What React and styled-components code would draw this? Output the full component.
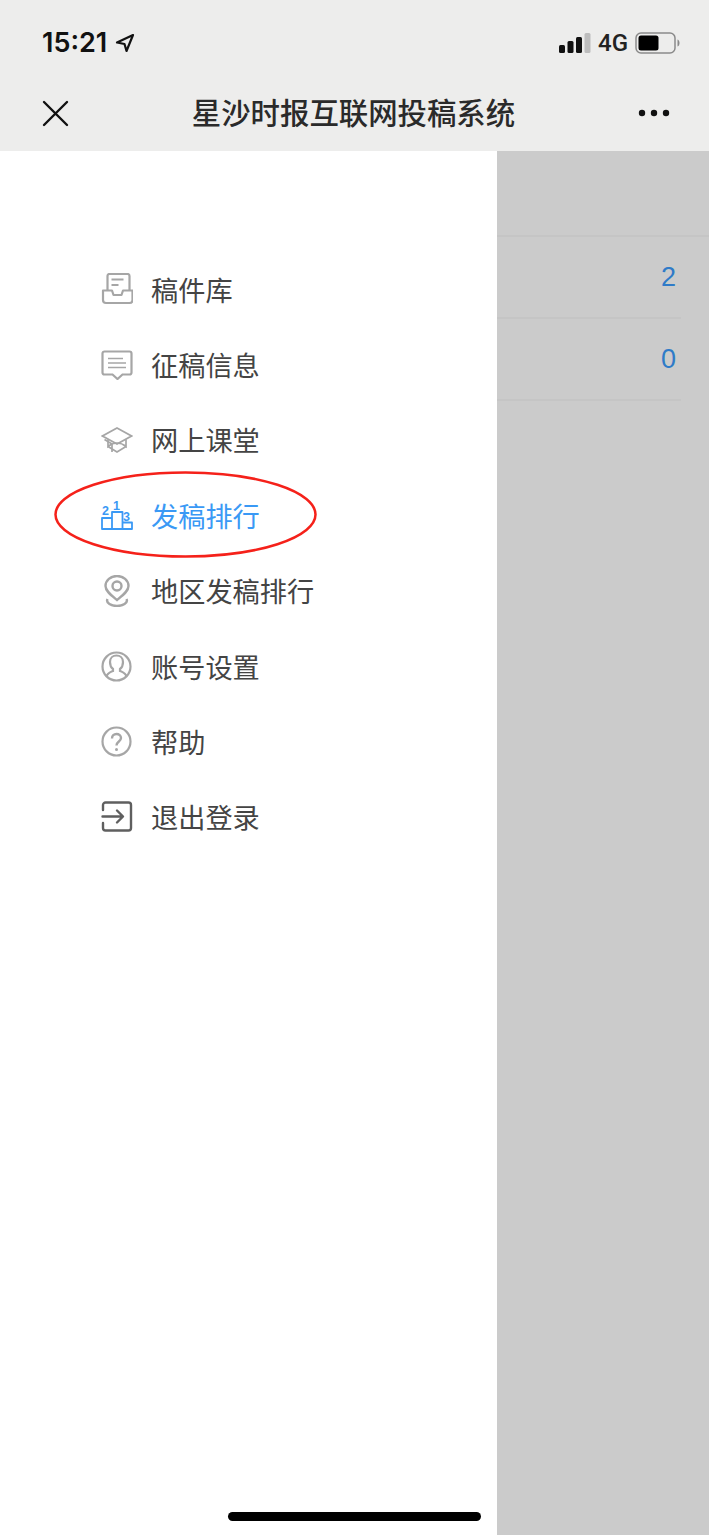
import React from "react";
import styled, { createGlobalStyle } from "styled-components";

const CJK = `"Noto Sans CJK SC", "Liberation Sans", sans-serif`;

const GlobalStyle = createGlobalStyle`
  html, body {
    margin: 0;
    padding: 0;
    background: #fff;
  }
  * {
    box-sizing: border-box;
  }
`;

const Screen = styled.div`
  position: relative;
  width: 709px;
  height: 1535px;
  overflow: hidden;
  display: flex;
  flex-direction: column;
  font-family: ${CJK};
`;

const Header = styled.header`
  height: 151px;
  flex: none;
  background: #ededec;
  display: flex;
  flex-direction: column;
`;

const StatusBar = styled.div`
  height: 75px;
  padding: 10px 29px 0 42px;
  display: flex;
  align-items: center;
  justify-content: space-between;
`;

const TimeGroup = styled.div`
  display: flex;
  align-items: center;
  gap: 8px;
`;

const Time = styled.span`
  font-family: Inter, "Liberation Sans", sans-serif;
  font-size: 27px;
  font-weight: 600;
  color: #111;
`;

const StatusRight = styled.div`
  display: flex;
  align-items: center;
  gap: 7px;
`;

const Network = styled.span`
  font-family: Roboto, "Liberation Sans", sans-serif;
  font-size: 24px;
  font-weight: 500;
  color: #222;
`;

const NavBar = styled.div`
  height: 76px;
  padding: 0 39px 0 42px;
  display: flex;
  align-items: center;
  justify-content: space-between;
`;

const NavTitle = styled.h1`
  margin: 0 0 4px;
  font-size: 29.4px;
  font-weight: 500;
  line-height: 38px;
  color: #2a2a2a;
`;

const Body = styled.div`
  flex: 1;
  display: flex;
  min-height: 0;
`;

const Drawer = styled.nav`
  width: 497px;
  flex: none;
  background: #fff;
  padding: 100px 0 0 100px;
  display: flex;
  flex-direction: column;
`;

const MenuItem = styled.div`
  height: 75.4px;
  display: flex;
  align-items: center;
  gap: 18px;
  font-size: 27.2px;
  color: ${(p) => (p.$active ? "#3a99f5" : "#444")};
`;

const IconBox = styled.span`
  width: 33px;
  height: 36px;
  margin-top: 1px;
  flex: none;
  display: flex;
  align-items: center;
  justify-content: center;
`;

const Backdrop = styled.div`
  flex: 1;
  background: #cbcbcb;
`;

const TopRow = styled.div`
  height: 86px;
  border-bottom: 2px solid #c5c5c5;
`;

const CountRow = styled.div`
  height: 82px;
  width: 184px;
  padding-right: 5px;
  border-bottom: 2px solid #c5c5c5;
  display: flex;
  align-items: center;
  justify-content: flex-end;
  font-family: "Liberation Sans", sans-serif;
  font-size: 27px;
  color: #2f7bc8;
`;

const Highlight = styled.svg`
  position: absolute;
  left: 53px;
  top: 470px;
`;

const HomeBar = styled.div`
  position: absolute;
  left: 228px;
  top: 1512px;
  width: 253px;
  height: 9px;
  border-radius: 5px;
  background: #000;
`;

const grey = { fill: "none", stroke: "#a6a6a6", strokeWidth: 2.2 };

const ArchiveIcon = () => (
  <svg width="32" height="32" viewBox="0 0 32 32" {...grey} strokeLinejoin="round">
    <path d="M6.500 17.500V3a2 2 0 0 1 2-2h18a2 2 0 0 1 2 2v14.500" />
    <path d="M10.500 6.500h12M10.500 12h7" strokeWidth="1.800" />
    <path d="M2 17.500v9.500a3 3 0 0 0 3 3h23.500a3 3 0 0 0 3-3v-9.500h-9.500l-1.500 4.500H12.500L11 17.500z" />
  </svg>
);

const MessageIcon = () => (
  <svg width="32" height="30" viewBox="0 0 32 30" {...grey}>
    <path d="M3.500 1.500h25a2 2 0 0 1 2 2v19a2 2 0 0 1-2 2h-7l-5 4.500-5-4.500h-8a2 2 0 0 1-2-2v-19a2 2 0 0 1 2-2z" />
    <path d="M7 8.500h15M7 13h18M7 17.500h18" strokeWidth="1.600" />
  </svg>
);

const CapIcon = () => (
  <svg width="32" height="28" viewBox="0 0 32 28" {...grey} strokeWidth="1.700">
    <path d="M16 2 30.500 10 16 18 1.500 10z" />
    <path d="M7 13.500v7c3-2.500 6-3.500 9-3.500s6 1 9 3.500v-7" />
    <path d="M7 20.500 16 26l9-5.500M3.500 13.500 11 18v8" />
  </svg>
);

const PodiumIcon = () => (
  <svg width="32" height="32" viewBox="0 0 32 32" fill="none" stroke="#3a99f5" strokeWidth="1.800" strokeLinejoin="round">
    <path d="M1 30V19h10v11zM11 30V13h10.500v17zM21.500 30v-6.500H31V30z" />
    <text x="1" y="16" fontFamily="Liberation Sans, sans-serif" fontSize="12.500" fontWeight="700" fill="#3a99f5" stroke="none">2</text>
    <text x="12" y="10.500" fontFamily="Liberation Sans, sans-serif" fontSize="12.500" fontWeight="700" fill="#3a99f5" stroke="none">1</text>
    <text x="22" y="22" fontFamily="Liberation Sans, sans-serif" fontSize="12.500" fontWeight="700" fill="#3a99f5" stroke="none">3</text>
  </svg>
);

const PinIcon = () => (
  <svg width="28" height="32" viewBox="0 0 28 32" {...grey} strokeWidth="2.400">
    <path d="M14 25C8 20 2.500 16 2.500 11a11.500 10 0 0 1 23 0c0 5-5.500 9-11.500 14z" />
    <circle cx="14" cy="11" r="4.500" />
    <path d="M4.500 24c-2 4 4 7 9.500 7s11.500-3 9.500-7" />
  </svg>
);

const UserIcon = () => (
  <svg width="31" height="31" viewBox="0 0 31 31" {...grey}>
    <circle cx="15.500" cy="15.500" r="14" />
    <path d="M5.500 25.500c.5-3 3-4 6.500-5.500v-2c-2-1.500-3-4-3-7 0-4 3-6.500 6.500-6.500S22 7 22 11c0 3-1 5.500-3 7v2c3.500 1.500 6 2.500 6.500 5.500" />
  </svg>
);

const HelpIcon = () => (
  <svg width="31" height="31" viewBox="0 0 31 31" {...grey}>
    <circle cx="15.500" cy="15.500" r="14" />
    <path d="M11 12.500c0-2.800 2-4.500 4.500-4.500s4.500 1.700 4.500 4c0 3.500-4.500 3.500-4.500 7.500" strokeWidth="2.400" />
    <circle cx="15.500" cy="23.500" r="1.500" fill="#a6a6a6" stroke="none" />
  </svg>
);

const LogoutIcon = () => (
  <svg width="32" height="31" viewBox="0 0 32 31" fill="none" stroke="#5f5f5f" strokeWidth="2.400" strokeLinecap="round" strokeLinejoin="round">
    <path d="M2 9V4a2.500 2.500 0 0 1 2.500-2.500h23A2.500 2.500 0 0 1 30 4v23a2.500 2.500 0 0 1-2.500 2.500h-23A2.500 2.500 0 0 1 2 27v-5" />
    <path d="M1.500 15.500h20M16 9.500l6 6-6 6" />
  </svg>
);

const LocationArrow = () => (
  <svg width="20" height="20" viewBox="0 0 20 20" fill="none" stroke="#111" strokeWidth="2.200" strokeLinejoin="round">
    <path d="M18 2 2 9.500l7.500 1.500 2 7z" />
  </svg>
);

const Signal = () => (
  <svg width="32" height="20" viewBox="0 0 32 20">
    <rect x="0" y="12" width="6" height="8" rx="1.500" fill="#111" />
    <rect x="8.500" y="8" width="6" height="12" rx="1.500" fill="#111" />
    <rect x="17" y="4" width="6" height="16" rx="1.500" fill="#111" />
    <rect x="25.500" y="0" width="6" height="20" rx="1.500" fill="#bdbdbd" />
  </svg>
);

const Battery = () => (
  <svg width="45" height="22" viewBox="0 0 45 22">
    <rect x="1" y="1" width="39" height="20" rx="5" fill="none" stroke="#8a8a8a" strokeWidth="1.500" />
    <rect x="3.500" y="3.500" width="20" height="15" rx="2.500" fill="#000" />
    <path d="M42.500 7.500c1.500.5 2 2 2 3.500s-.5 3-2 3.500z" fill="#8a8a8a" />
  </svg>
);

const CloseIcon = () => (
  <svg width="27" height="27" viewBox="0 0 27 27" fill="none" stroke="#111" strokeWidth="2.400" strokeLinecap="round">
    <path d="M2 2l23 23M25 2 2 25" />
  </svg>
);

const MoreIcon = () => (
  <svg width="32" height="8" viewBox="0 0 32 8" fill="#111">
    <circle cx="4" cy="4" r="3.200" />
    <circle cx="16" cy="4" r="3.200" />
    <circle cx="28" cy="4" r="3.200" />
  </svg>
);

const menu = [
  { label: "稿件库", icon: <ArchiveIcon /> },
  { label: "征稿信息", icon: <MessageIcon /> },
  { label: "网上课堂", icon: <CapIcon /> },
  { label: "发稿排行", icon: <PodiumIcon />, active: true },
  { label: "地区发稿排行", icon: <PinIcon /> },
  { label: "账号设置", icon: <UserIcon /> },
  { label: "帮助", icon: <HelpIcon /> },
  { label: "退出登录", icon: <LogoutIcon /> },
];

export default function App() {
  return (
    <Screen>
      <GlobalStyle />
      <Header>
        <StatusBar>
          <TimeGroup>
            <Time>15:21</Time>
            <LocationArrow />
          </TimeGroup>
          <StatusRight>
            <Signal />
            <Network>4G</Network>
            <Battery />
          </StatusRight>
        </StatusBar>
        <NavBar>
          <CloseIcon />
          <NavTitle>星沙时报互联网投稿系统</NavTitle>
          <MoreIcon />
        </NavBar>
      </Header>
      <Body>
        <Drawer>
          {menu.map((item) => (
            <MenuItem key={item.label} $active={item.active}>
              <IconBox>{item.icon}</IconBox>
              {item.label}
            </MenuItem>
          ))}
        </Drawer>
        <Backdrop>
          <TopRow />
          <CountRow>2</CountRow>
          <CountRow>0</CountRow>
        </Backdrop>
      </Body>
      <Highlight width="265" height="89" viewBox="0 0 265 89">
        <ellipse cx="132.500" cy="44.500" rx="130" ry="42" fill="none" stroke="#f5211a" strokeWidth="2.500" />
      </Highlight>
      <HomeBar />
    </Screen>
  );
}
